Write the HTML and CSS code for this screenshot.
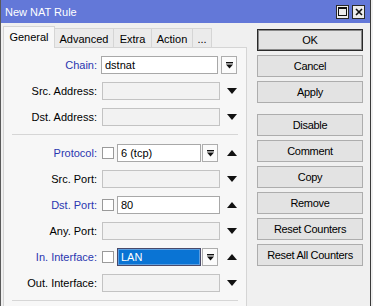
FILE: index.html
```html
<!DOCTYPE html>
<html>
<head>
<meta charset="utf-8">
<link rel="stylesheet" href="styles.css">
</head>
<body>
<div class="window">
  <div class="titlebar">
    <span class="title">New NAT Rule</span>
    <span class="tbb"><svg width="9" height="9" viewBox="0 0 9 9"><rect x="0.5" y="0.5" width="8" height="8" fill="none" stroke="#111"/><rect x="0" y="0" width="9" height="2" fill="#111"/></svg></span>
    <span class="tbb"><svg width="8" height="8" viewBox="0 0 8 8"><path d="M1 1L7 7M7 1L1 7" stroke="#111" stroke-width="1.6"/></svg></span>
  </div>
  <div class="body">
    <div class="left">
      <div class="tabs">
        <div class="tab active w-gen">General</div>
        <div class="tab w-adv">Advanced</div>
        <div class="tab w-ext">Extra</div>
        <div class="tab w-act">Action</div>
        <div class="tab w-dot">...</div>
      </div>
      <div class="panel">
        <div class="form">
          <div class="row">
            <span class="lbl blue">Chain:</span>
            <div class="field chain">
              <div class="inp chain-inp">dstnat</div>
              <div class="dd"><svg width="7" height="7" viewBox="0 0 7 7"><rect x="0" y="0" width="7" height="1.4" fill="#111"/><polygon points="0,2.5 7,2.5 3.5,6.5" fill="#111"/></svg></div>
            </div>
          </div>
          <div class="row">
            <span class="lbl">Src. Address:</span>
            <div class="field"><div class="inp dis full"></div></div>
            <div class="arr"><svg width="10" height="6" viewBox="0 0 10 6"><polygon points="0,0 10,0 5,6" fill="#111"/></svg></div>
          </div>
          <div class="row">
            <span class="lbl">Dst. Address:</span>
            <div class="field"><div class="inp dis full"></div></div>
            <div class="arr"><svg width="10" height="6" viewBox="0 0 10 6"><polygon points="0,0 10,0 5,6" fill="#111"/></svg></div>
          </div>
          <div class="sep"></div>
          <div class="row">
            <span class="lbl blue">Protocol:</span>
            <div class="field">
              <span class="cb"></span>
              <div class="inp short">6 (tcp)</div>
              <div class="dd"><svg width="7" height="7" viewBox="0 0 7 7"><rect x="0" y="0" width="7" height="1.4" fill="#111"/><polygon points="0,2.5 7,2.5 3.5,6.5" fill="#111"/></svg></div>
            </div>
            <div class="arr"><svg width="10" height="6" viewBox="0 0 10 6"><polygon points="0,6 10,6 5,0" fill="#111"/></svg></div>
          </div>
          <div class="row">
            <span class="lbl">Src. Port:</span>
            <div class="field"><div class="inp dis full"></div></div>
            <div class="arr"><svg width="10" height="6" viewBox="0 0 10 6"><polygon points="0,0 10,0 5,6" fill="#111"/></svg></div>
          </div>
          <div class="row">
            <span class="lbl blue">Dst. Port:</span>
            <div class="field">
              <span class="cb"></span>
              <div class="inp long">80</div>
            </div>
            <div class="arr"><svg width="10" height="6" viewBox="0 0 10 6"><polygon points="0,6 10,6 5,0" fill="#111"/></svg></div>
          </div>
          <div class="row">
            <span class="lbl">Any. Port:</span>
            <div class="field"><div class="inp dis full"></div></div>
            <div class="arr"><svg width="10" height="6" viewBox="0 0 10 6"><polygon points="0,0 10,0 5,6" fill="#111"/></svg></div>
          </div>
          <div class="row">
            <span class="lbl blue">In. Interface:</span>
            <div class="field">
              <span class="cb"></span>
              <div class="inp short sel">LAN</div>
              <div class="dd"><svg width="7" height="7" viewBox="0 0 7 7"><rect x="0" y="0" width="7" height="1.4" fill="#111"/><polygon points="0,2.5 7,2.5 3.5,6.5" fill="#111"/></svg></div>
            </div>
            <div class="arr"><svg width="10" height="6" viewBox="0 0 10 6"><polygon points="0,6 10,6 5,0" fill="#111"/></svg></div>
          </div>
          <div class="row">
            <span class="lbl">Out. Interface:</span>
            <div class="field"><div class="inp dis full"></div></div>
            <div class="arr"><svg width="10" height="6" viewBox="0 0 10 6"><polygon points="0,0 10,0 5,6" fill="#111"/></svg></div>
          </div>
          <div class="sep"></div>
        </div>
      </div>
    </div>
    <div class="btns">
      <div class="btn ok">OK</div>
      <div class="btn">Cancel</div>
      <div class="btn grp">Apply</div>
      <div class="btn">Disable</div>
      <div class="btn">Comment</div>
      <div class="btn">Copy</div>
      <div class="btn">Remove</div>
      <div class="btn">Reset Counters</div>
      <div class="btn">Reset All Counters</div>
    </div>
  </div>
</div>
</body>
</html>
```

FILE: styles.css
```css
html, body {
  margin: 0;
  padding: 0;
  background: #f0f0f0;
}
body {
  width: 373px;
  height: 306px;
  overflow: hidden;
  font-family: "Liberation Sans", Arial, sans-serif;
  font-size: 11px;
  color: #000;
}
.window {
  width: 369px;
  height: 306px;
  border-left: 1px solid #5a5a5a;
  border-right: 1px solid #3a3a3a;
  background: #f0f0f0;
  overflow: hidden;
}
.titlebar {
  height: 23px;
  background: #6378d8;
  display: flex;
  align-items: center;
  padding: 0 5px 0 4px;
  gap: 3px;
}
.title {
  color: #fff;
  font-size: 11px;
  flex: 1;
  margin-top: 1px;
}
.tbb {
  width: 13px;
  height: 14px;
  box-sizing: border-box;
  border: 1px solid #2a2a2a;
  background: #ececec;
  display: flex;
  align-items: center;
  justify-content: center;
}
.body {
  display: flex;
  gap: 10px;
  padding: 3px 7px 0 2px;
}
.left {
  width: 244px;
  flex: none;
}
.tabs {
  display: flex;
  align-items: flex-end;
  height: 21px;
}
.tab {
  height: 19px;
  box-sizing: border-box;
  border: 1px solid #d5d5d5;
  border-bottom: none;
  border-right: none;
  background: #ebebeb;
  display: flex;
  align-items: center;
  justify-content: center;
  padding-top: 1px;
}
.tab.w-dot { border-right: 1px solid #d5d5d5; }
.tab.active {
  height: 22px;
  margin-bottom: -1px;
  background: #f7f7f7;
  border-right: 1px solid #d5d5d5;
  position: relative;
  z-index: 1;
  padding-top: 0;
  padding-bottom: 1px;
}
.w-gen { width: 52px; }
.w-adv { width: 59px; margin-left: -1px; border-left-color: #d5d5d5; }
.w-ext { width: 38px; }
.w-act { width: 41px; }
.w-dot { width: 20px; }
.panel {
  height: 270px;
  box-sizing: border-box;
  border: 1px solid #d5d5d5;
  background: #f7f7f7;
  padding: 8px 8px 0 0;
}
.form {
  display: flex;
  flex-direction: column;
  gap: 8px;
}
.row {
  display: flex;
  align-items: center;
  height: 18px;
}
.lbl {
  width: 93px;
  margin-right: 5px;
  text-align: right;
  white-space: nowrap;
  flex: none;
}
.blue { color: #2a36b0; }
.field {
  width: 118px;
  display: flex;
  align-items: center;
  flex: none;
}
.field.chain { width: 136px; }
.inp {
  height: 18px;
  box-sizing: border-box;
  border: 1px solid #a8a8a8;
  background: #fff;
  padding-left: 3px;
  line-height: 16px;
  white-space: nowrap;
  flex: none;
}
.chain-inp { width: 117px; margin-left: -1px; margin-right: 3px; }
.full { width: 118px; }
.dis {
  background: #f2f2f2;
  border-color: #c3c3c3;
}
.short { width: 84px; margin-right: 1px; }
.long { width: 103px; }
.sel {
  background: #0a74d4;
  color: #fff;
  border-color: #4a4a6a;
  box-shadow: inset 0 0 0 1px #5c9ee0;
}
.cb {
  width: 12px;
  height: 12px;
  box-sizing: border-box;
  border: 1px solid #9a9a9a;
  background: #fff;
  margin-right: 3px;
  flex: none;
}
.dd {
  width: 16px;
  height: 18px;
  box-sizing: border-box;
  border: 1px solid #adadad;
  background: #fbfbfb;
  display: flex;
  align-items: center;
  justify-content: center;
  flex: none;
}
.arr {
  width: 19px;
  display: flex;
  justify-content: center;
  align-items: center;
  margin-left: 2px;
  flex: none;
}
.sep {
  height: 1px;
  background: #d6d6d6;
  margin: 0 0 1px 8px;
}
.btns {
  width: 106px;
  flex: none;
  display: flex;
  flex-direction: column;
  gap: 4px;
  margin-top: 3px;
}
.btn {
  height: 22px;
  box-sizing: border-box;
  border: 1px solid #adadad;
  background: #e3e3e3;
  display: flex;
  align-items: center;
  justify-content: center;
  white-space: nowrap;
  letter-spacing: -0.3px;
}
.btn.ok {
  border-color: #2a2a2a;
  box-shadow: inset 0 0 0 1px #8a8a8a;
}
.btn.grp { margin-bottom: 7px; }
```
